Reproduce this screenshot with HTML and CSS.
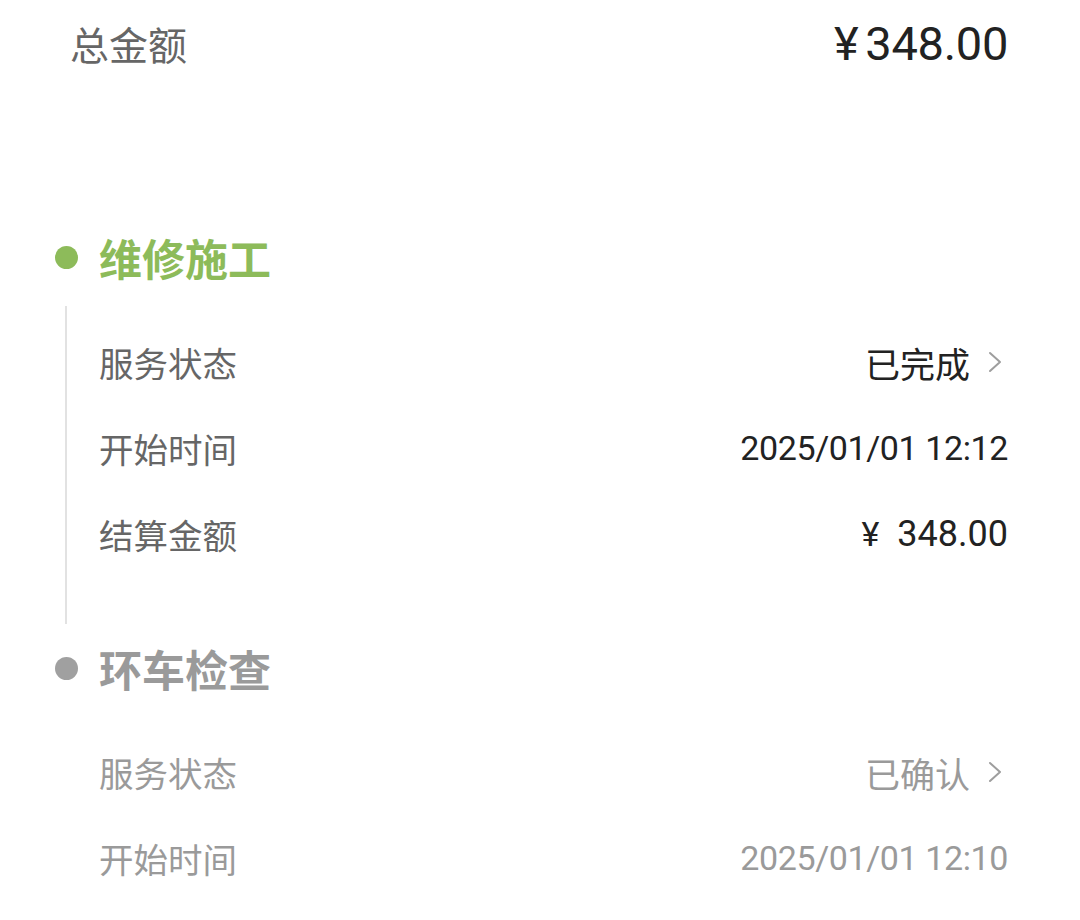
FILE: index.html
```html
<!DOCTYPE html>
<html lang="zh-CN">
<head>
<meta charset="utf-8">
<title>订单详情</title>
<link rel="stylesheet" href="styles.css">
</head>
<body>
<div class="page">
  <div class="summary">
    <span class="summary-label">总金额</span>
    <span class="summary-value"><span class="yen">¥</span>348.00</span>
  </div>

  <div class="timeline">
    <section class="step step-active">
      <div class="step-head">
        <span class="dot"></span>
        <span class="step-title">维修施工</span>
      </div>
      <div class="step-body">
        <div class="row">
          <span class="row-label">服务状态</span>
          <span class="row-value link">已完成<svg class="chev" viewBox="0 0 14 22" width="14" height="22"><path d="M2 2 L12 11 L2 20" fill="none" stroke="currentColor" stroke-width="2" stroke-linecap="round" stroke-linejoin="round"/></svg></span>
        </div>
        <div class="row">
          <span class="row-label">开始时间</span>
          <span class="row-value">2025/01/01 12:12</span>
        </div>
        <div class="row">
          <span class="row-label">结算金额</span>
          <span class="row-value money"><span class="yen-sm">¥</span>348.00</span>
        </div>
      </div>
    </section>

    <section class="step step-done">
      <div class="step-head">
        <span class="dot"></span>
        <span class="step-title">环车检查</span>
      </div>
      <div class="step-body no-line">
        <div class="row">
          <span class="row-label">服务状态</span>
          <span class="row-value link">已确认<svg class="chev" viewBox="0 0 14 22" width="14" height="22"><path d="M2 2 L12 11 L2 20" fill="none" stroke="currentColor" stroke-width="2" stroke-linecap="round" stroke-linejoin="round"/></svg></span>
        </div>
        <div class="row">
          <span class="row-label">开始时间</span>
          <span class="row-value">2025/01/01 12:10</span>
        </div>
      </div>
    </section>
  </div>
</div>
</body>
</html>
```

FILE: styles.css
```css
html, body {
  margin: 0;
  padding: 0;
  background: #ffffff;
}

body {
  font-family: Roboto, "Noto Sans CJK SC", sans-serif;
  color: #222222;
}

.page {
  width: 1080px;
  height: 920px;
  overflow: hidden;
}

.summary {
  display: flex;
  justify-content: space-between;
  align-items: center;
  height: 86px;
  padding: 0 72px 0 70px;
}

.summary-label {
  font-size: 39px;
  color: #666666;
}

.summary-value {
  font-size: 47px;
  color: #222222;
  letter-spacing: -0.3px;
}

.yen {
  margin-right: 7px;
}

.timeline {
  margin-top: 141px;
  display: flex;
  flex-direction: column;
}

.step-head {
  display: flex;
  align-items: center;
  height: 60px;
  padding-left: 55px;
  gap: 21px;
}

.dot {
  width: 23px;
  height: 23px;
  border-radius: 50%;
  background: #8dbb5a;
}

.step-title {
  font-size: 43px;
  font-weight: 700;
  color: #8dbb5a;
}

.step-body {
  margin: 19px 0 14px 65px;
  padding: 13px 72px 47px 32px;
  border-left: 2px solid #e2e2e2;
}

.step-body.no-line {
  border-left-color: transparent;
  padding-top: 12px;
}

.row {
  display: flex;
  justify-content: space-between;
  align-items: center;
  height: 86px;
}

.row-label {
  font-size: 34.5px;
  color: #666666;
}

.row-value {
  font-size: 34px;
  color: #222222;
  letter-spacing: -0.4px;
  display: flex;
  align-items: center;
}

.money {
  font-size: 36px;
  letter-spacing: 0;
}

.yen-sm {
  margin-right: 18px;
  font-size: 34px;
}

.link {
  font-size: 35px;
  letter-spacing: 0;
}

.chev {
  margin-left: 18px;
  margin-right: 6px;
  color: #9e9e9e;
}

.step-done .dot {
  background: #a0a0a0;
}

.step-done .step-title {
  color: #9a9a9a;
}

.step-done .row-label,
.step-done .row-value {
  color: #9a9a9a;
}
```
